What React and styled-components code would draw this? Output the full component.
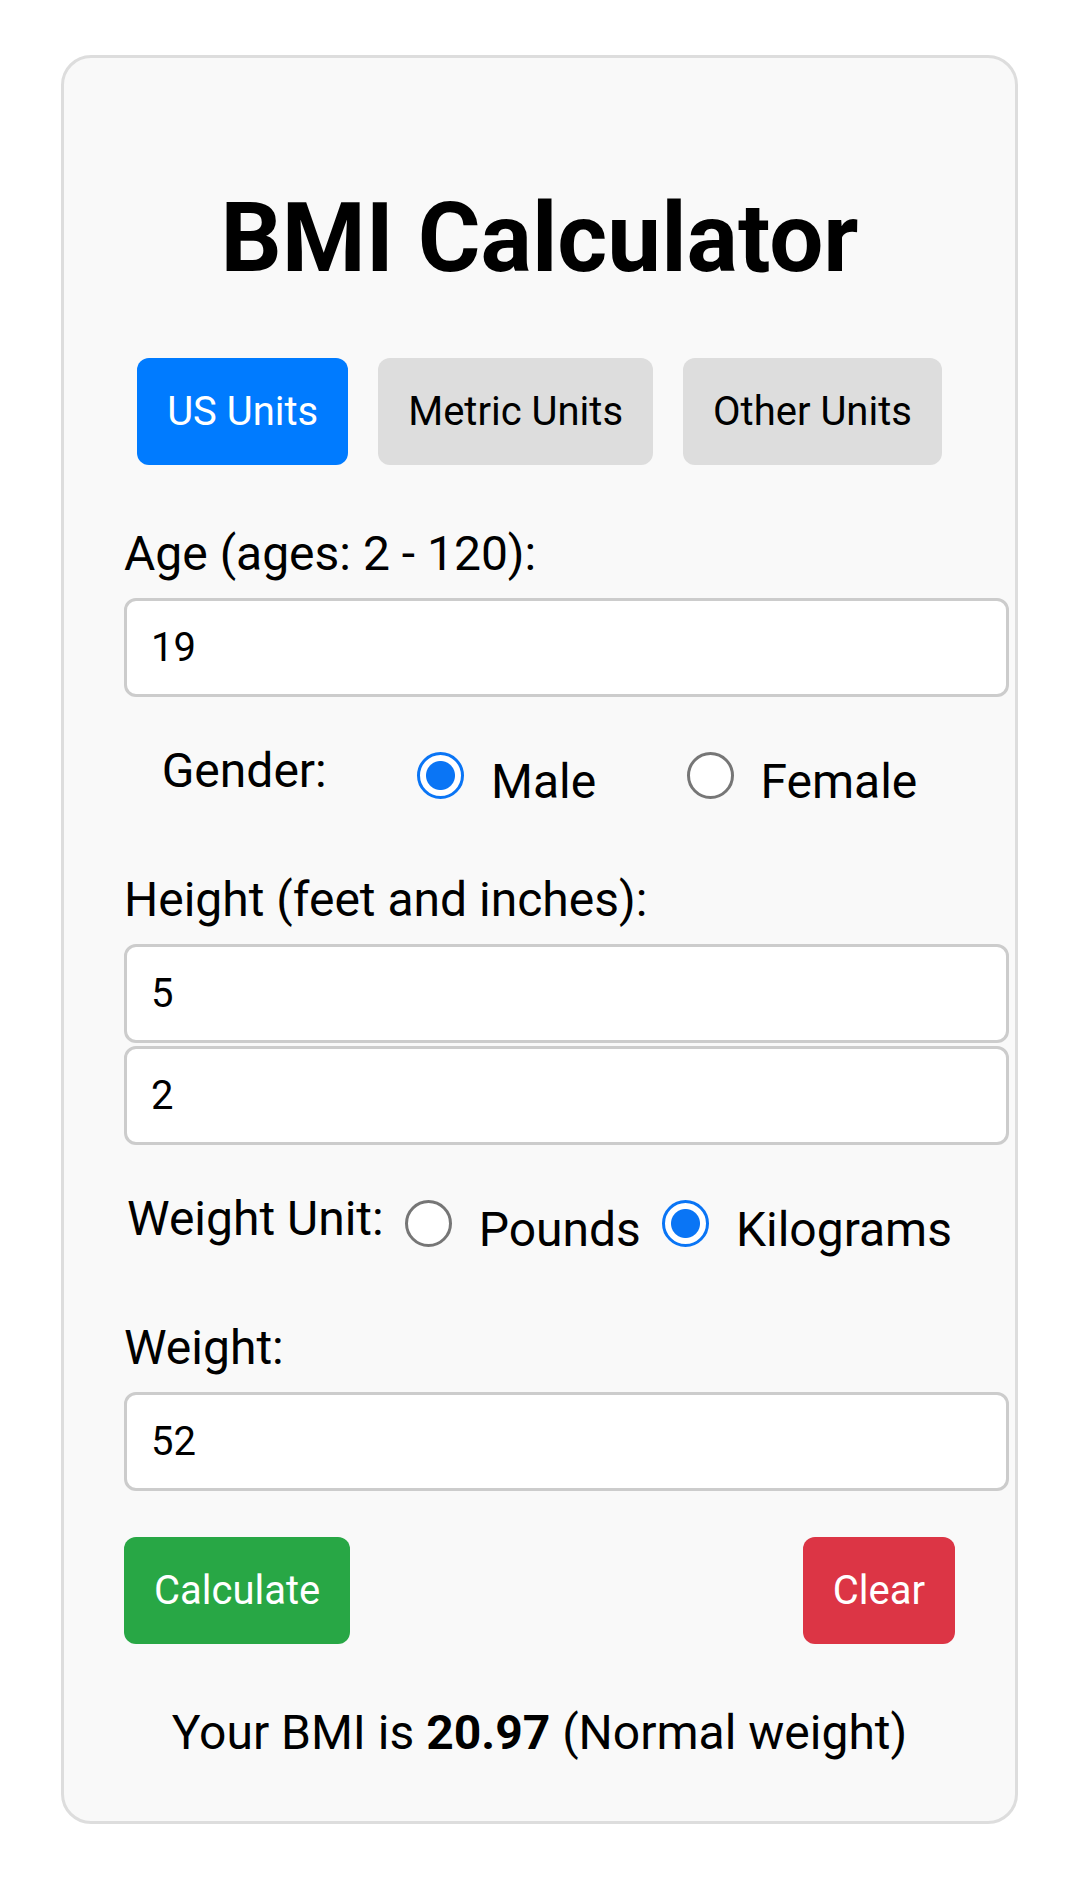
import React, { useState } from 'react'
import styled, { createGlobalStyle } from 'styled-components'

const GlobalStyle = createGlobalStyle`
    html, body {
        margin: 0;
        padding: 0;
        background: #ffffff;
    }
    body {
        font-family: Roboto, "Noto Sans", "Liberation Sans", sans-serif;
        color: #000;
    }
    * {
        font-family: inherit;
    }
`

const Page = styled.div`
    padding: 55px 61px;
`
const Card = styled.div`
    background: #f9f9f9;
    border: 3px solid #dddddd;
    border-radius: 30px;
    padding: 60px;
`
const Title = styled.h1`
    margin: 64px 0;
    font-size: 96px;
    font-weight: 700;
    line-height: normal;
    text-align: center;
`
const Tabs = styled.div`
    display: flex;
    justify-content: center;
    gap: 30px;
    margin-bottom: 60px;
`
const Button = styled.button`
    border: none;
    border-radius: 12px;
    padding: 30px;
    font-size: 40px;
    line-height: normal;
    background: ${props => props.bg};
    color: ${props => props.fg || '#fff'};
    cursor: pointer;
`
const Label = styled.label`
    display: block;
    font-size: 48px;
    line-height: normal;
    margin-bottom: 16px;
`
const Input = styled.input`
    display: block;
    box-sizing: content-box;
    width: 100%;
    height: 47px;
    margin: 0;
    padding: 23px 24px;
    border: 3px solid #cccccc;
    border-radius: 12px;
    background: #fff;
    font-size: 40px;
    color: #000;
    outline: none;
    & + & {
        margin-top: 3px;
    }
`
const OptionRow = styled.div`
    display: flex;
    justify-content: space-around;
    align-items: flex-start;
    margin: 45px 0 61px;
    white-space: nowrap;
`
const GroupLabel = styled.span`
    font-size: 48px;
    line-height: normal;
    flex-shrink: 0;
`
const Option = styled.label`
    display: flex;
    align-items: flex-start;
    font-size: 48px;
    line-height: normal;
    margin-top: 11px;
    flex-shrink: 0;
`
const Radio = styled.input`
    appearance: none;
    flex-shrink: 0;
    box-sizing: border-box;
    width: 47px;
    height: 47px;
    margin: -1px 27px 0 15px;
    border-radius: 50%;
    border: 3px solid #767676;
    background: #fff;
    &:checked {
        border-color: #0a75f5;
        background: radial-gradient(circle, #0a75f5 0 14px, #fff 15px);
    }
`
const Actions = styled.div`
    display: flex;
    justify-content: space-between;
    margin-top: 46px;
`
const Result = styled.p`
    margin: 60px 0 0;
    font-size: 48px;
    line-height: normal;
    text-align: center;
`

export default function App() {
    const [units, setUnits] = useState('us')
    const [gender, setGender] = useState('male')
    const [weightUnit, setWeightUnit] = useState('kg')

    const tabs = [
        { id: 'us', label: 'US Units' },
        { id: 'metric', label: 'Metric Units' },
        { id: 'other', label: 'Other Units' },
    ]

    return (
        <Page>
            <GlobalStyle />
            <Card>
                <Title>BMI Calculator</Title>
                <Tabs>
                    {tabs.map(tab => (
                        <Button
                            key={tab.id}
                            bg={units === tab.id ? '#007bff' : '#dddddd'}
                            fg={units === tab.id ? '#fff' : '#000'}
                            onClick={() => setUnits(tab.id)}
                        >
                            {tab.label}
                        </Button>
                    ))}
                </Tabs>

                <Label>Age (ages: 2 - 120):</Label>
                <Input type="text" defaultValue="19" />

                <OptionRow>
                    <GroupLabel>Gender:</GroupLabel>
                    <Option>
                        <Radio type="radio" name="gender" checked={gender === 'male'} onChange={() => setGender('male')} />
                        Male
                    </Option>
                    <Option>
                        <Radio type="radio" name="gender" checked={gender === 'female'} onChange={() => setGender('female')} />
                        Female
                    </Option>
                </OptionRow>

                <Label>Height (feet and inches):</Label>
                <Input type="text" defaultValue="5" />
                <Input type="text" defaultValue="2" />

                <OptionRow>
                    <GroupLabel>Weight Unit:</GroupLabel>
                    <Option>
                        <Radio type="radio" name="wunit" checked={weightUnit === 'lb'} onChange={() => setWeightUnit('lb')} />
                        Pounds
                    </Option>
                    <Option>
                        <Radio type="radio" name="wunit" checked={weightUnit === 'kg'} onChange={() => setWeightUnit('kg')} />
                        Kilograms
                    </Option>
                </OptionRow>

                <Label>Weight:</Label>
                <Input type="text" defaultValue="52" />

                <Actions>
                    <Button bg="#28a745">Calculate</Button>
                    <Button bg="#dc3545">Clear</Button>
                </Actions>

                <Result>
                    Your BMI is <strong>20.97</strong> (Normal weight)
                </Result>
            </Card>
        </Page>
    )
}
